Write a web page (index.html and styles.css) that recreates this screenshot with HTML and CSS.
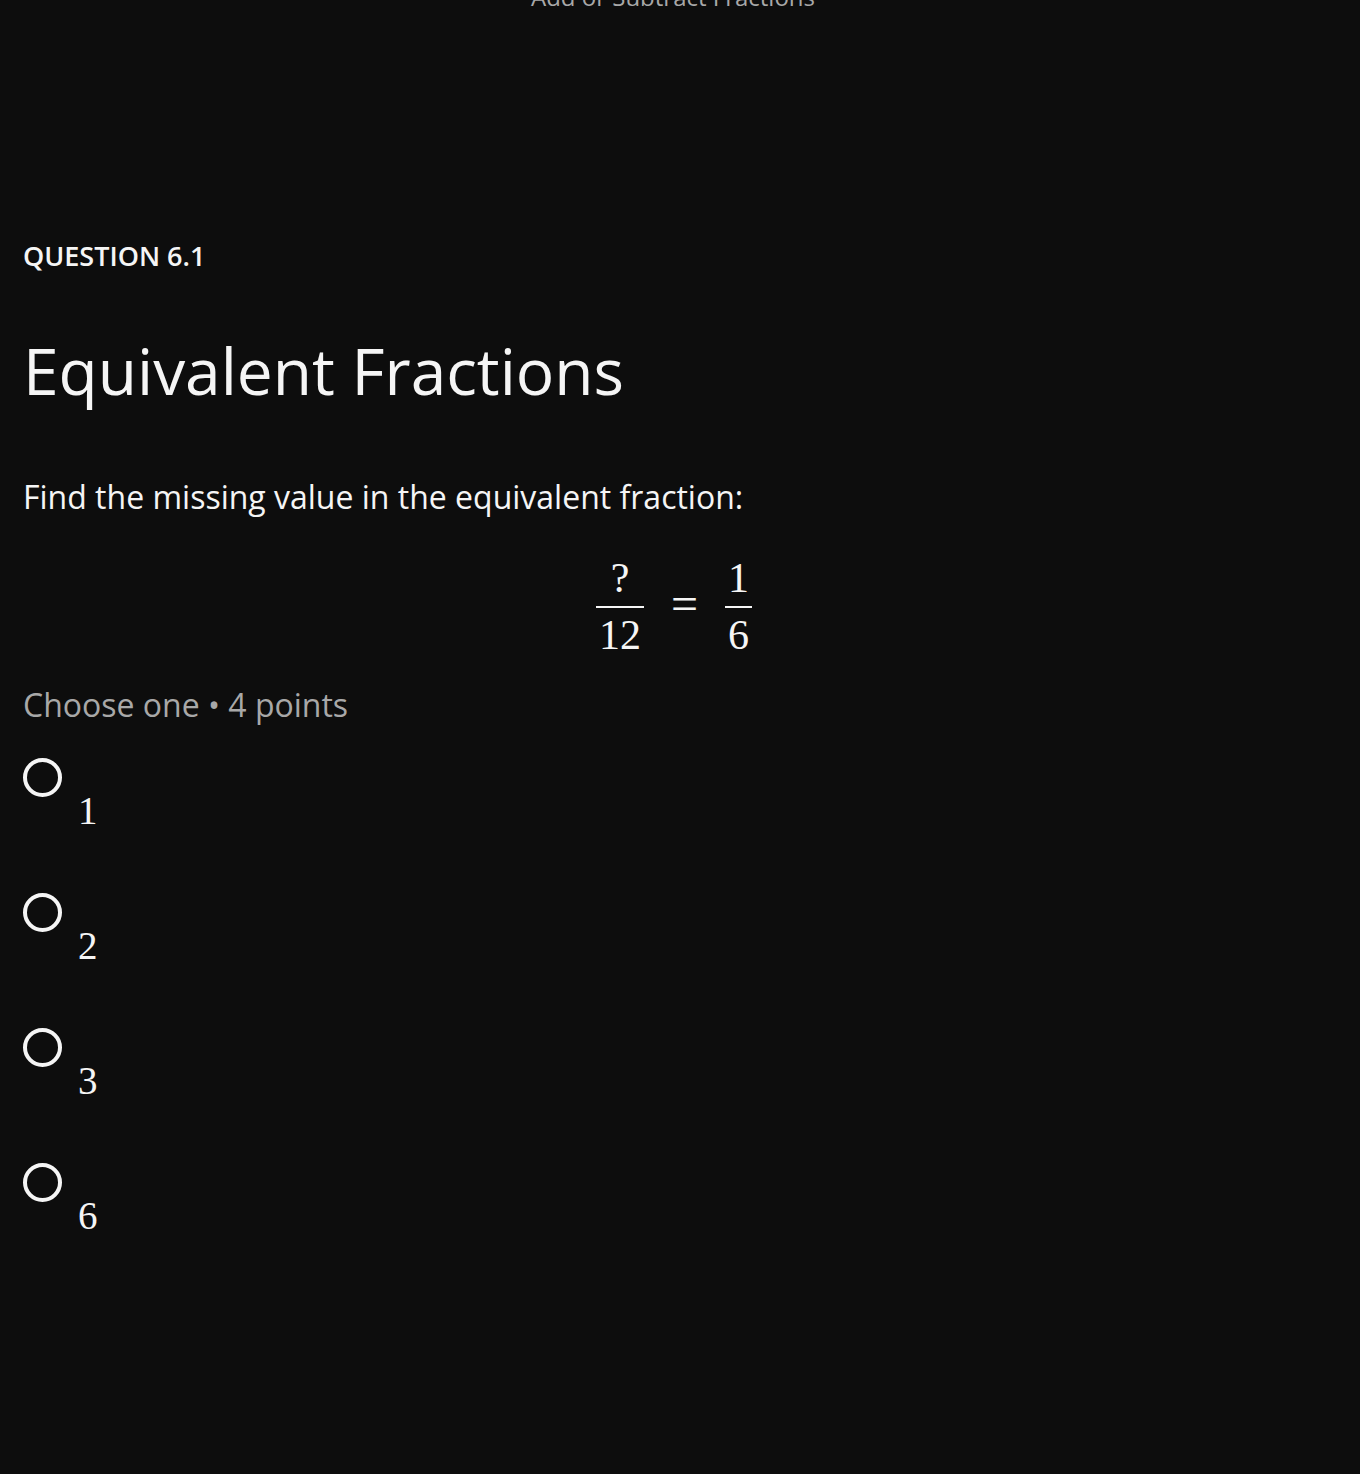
FILE: index.html
```html
<!DOCTYPE html>
<html lang="en">
<head>
    <meta charset="UTF-8">
    <title>Equivalent Fractions</title>
    <link rel="stylesheet" href="styles.css">
</head>
<body>
    <div class="page">
        <div class="lesson-title">Add or Subtract Fractions</div>
        <div class="question">
            <div class="question-number">QUESTION 6.1</div>
            <h1 class="question-title">Equivalent Fractions</h1>
            <p class="question-text">Find the missing value in the equivalent fraction:</p>
            <div class="math-display">
                <span class="frac">
                    <span class="num">?</span>
                    <span class="den">12</span>
                </span>
                <span class="eq">=</span>
                <span class="frac">
                    <span class="num">1</span>
                    <span class="den">6</span>
                </span>
            </div>
            <div class="question-meta">Choose one &bull; 4 points</div>
            <div class="choices">
                <label class="choice"><span class="radio"></span><span class="choice-label">1</span></label>
                <label class="choice"><span class="radio"></span><span class="choice-label">2</span></label>
                <label class="choice"><span class="radio"></span><span class="choice-label">3</span></label>
                <label class="choice"><span class="radio"></span><span class="choice-label">6</span></label>
            </div>
        </div>
    </div>
</body>
</html>
```

FILE: styles.css
```css
body {
    margin: 0;
    background: #0d0d0d;
    color: #f5f5f5;
    font-family: "Open Sans", sans-serif;
}
.page {
    padding: 0 23px;
}
.lesson-title {
    text-align: center;
    color: #a8a8a8;
    font-size: 24px;
    line-height: 24px;
    margin-top: -15px;
    padding-right: 14px;
}
.question {
    padding-top: 229px;
}
.question-number {
    font-size: 27px;
    font-weight: 600;
    line-height: 36px;
}
.question-title {
    font-size: 64px;
    font-weight: 400;
    line-height: 80px;
    margin: 57px 0 0;
}
.question-text {
    font-size: 32px;
    line-height: 40px;
    margin: 66px 0 0;
}
.math-display {
    display: flex;
    justify-content: center;
    align-items: center;
    gap: 27px;
    margin: 40px 12px 0 0;
    font-family: "Liberation Serif", serif;
    font-size: 42px;
}
.frac {
    display: flex;
    flex-direction: column;
    align-items: stretch;
    text-align: center;
}
.num {
    line-height: 42px;
    padding: 0 3px 7px;
}
.den {
    line-height: 42px;
    padding: 6px 3px 0;
    border-top: 2px solid #f5f5f5;
}
.eq {
    font-size: 48px;
    line-height: 48px;
    margin-bottom: 6px;
}
.question-meta {
    color: #a8a8a8;
    font-size: 32px;
    line-height: 40px;
    margin-top: 29px;
}
.choices {
    display: flex;
    flex-direction: column;
    gap: 60px;
    margin-top: 33px;
}
.choice {
    display: flex;
    align-items: flex-start;
    gap: 16px;
}
.radio {
    width: 31px;
    height: 31px;
    border: 4px solid #f5f5f5;
    border-radius: 50%;
    flex-shrink: 0;
}
.choice-label {
    font-family: "Liberation Serif", serif;
    font-size: 39px;
    line-height: 44px;
    margin-top: 31px;
}
```
